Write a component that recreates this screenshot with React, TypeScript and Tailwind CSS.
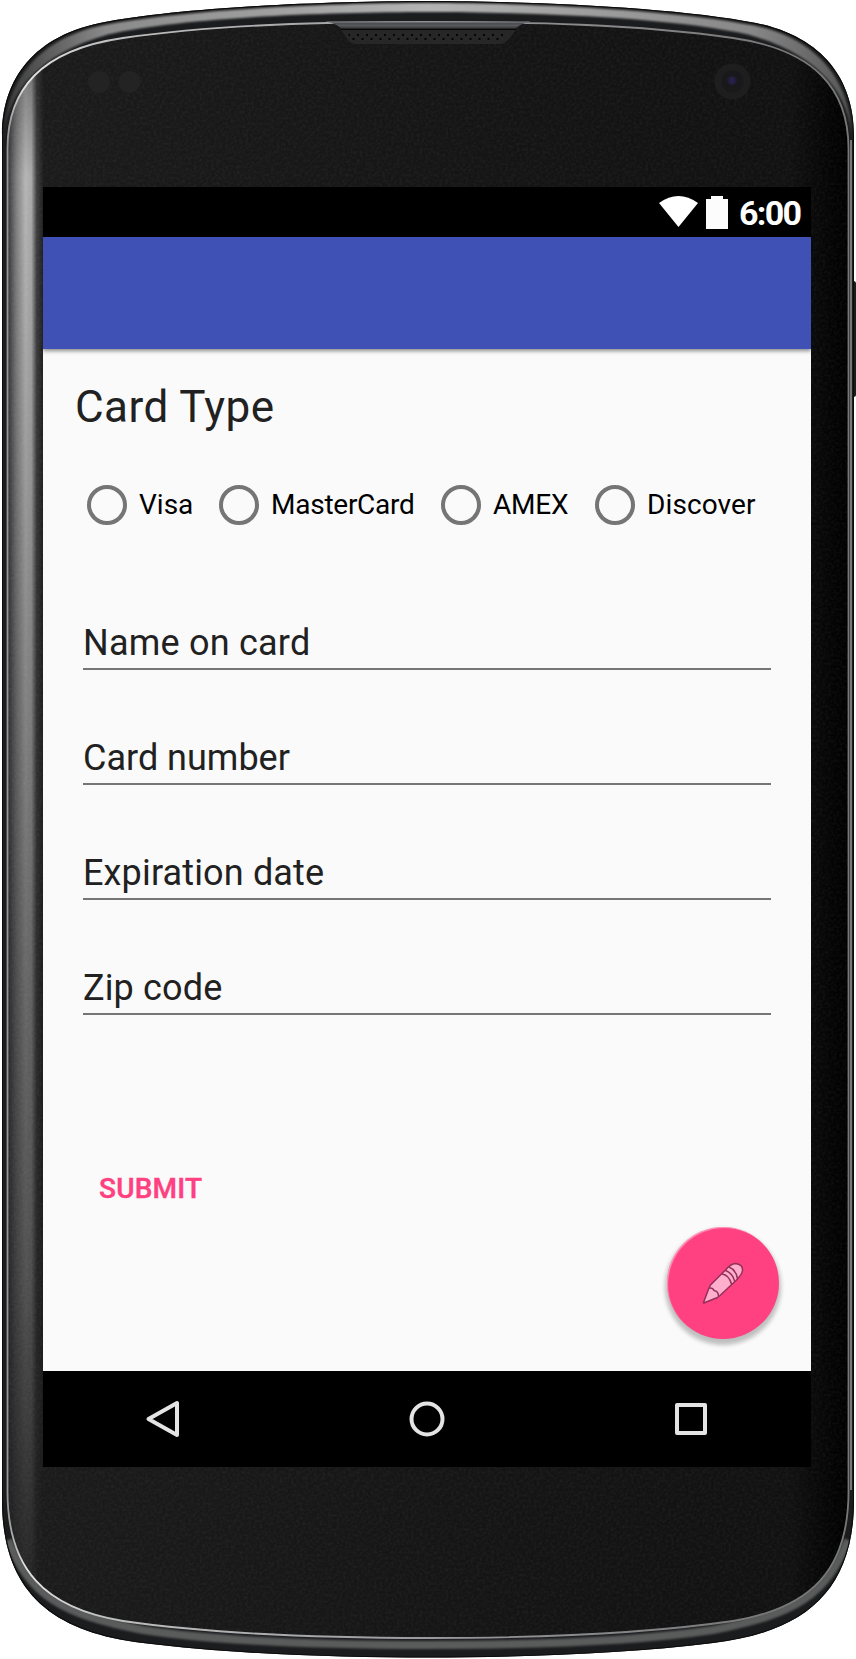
const OUTER =
  "M2 135C2 85 28 38 100 23C180 7 330 1 428 1C526 1 676 7 756 23C828 38 854 85 854 135V1500C854 1590 806 1632 713 1643C626 1654 516 1657.5 428 1657.5C340 1657.5 230 1654 143 1643C50 1632 2 1590 2 1500Z";
const INNER =
  "M7.5 150C7 90 40 50 123 38C220 24 330 22 428 22C526 22 636 24 733 38C816 50 849 90 848.5 150V1490C849 1570 811 1608 733 1621C636 1635 516 1638 428 1638C340 1638 220 1635 123 1621C45 1608 7 1570 7.5 1490Z";

function PhoneBody() {
  return (
    <svg viewBox="0 0 856 1659" width="856" height="1659" className="absolute inset-0" aria-hidden="true">
      <defs>
        <linearGradient id="face" x1="0" x2="1">
          <stop offset="0" stopColor="#1b1b1b" />
          <stop offset="0.6" stopColor="#141414" />
          <stop offset="0.93" stopColor="#111" />
          <stop offset="0.98" stopColor="#040404" />
          <stop offset="1" stopColor="#000" />
        </linearGradient>
        <linearGradient id="strip" gradientUnits="userSpaceOnUse" x1="7" x2="44" y1="0" y2="0">
          <stop offset="0" stopColor="#fff" stopOpacity="0.1" />
          <stop offset="0.25" stopColor="#fff" stopOpacity="0.55" />
          <stop offset="0.5" stopColor="#fff" stopOpacity="0.85" />
          <stop offset="0.66" stopColor="#fff" stopOpacity="0.78" />
          <stop offset="0.8" stopColor="#fff" stopOpacity="0.2" />
          <stop offset="1" stopColor="#fff" stopOpacity="0" />
        </linearGradient>
        <linearGradient id="stripFade" gradientUnits="userSpaceOnUse" x1="0" x2="0" y1="70" y2="1590">
          <stop offset="0" stopColor="#fff" stopOpacity="0.5" />
          <stop offset="0.07" stopColor="#fff" stopOpacity="0.8" />
          <stop offset="0.22" stopColor="#fff" stopOpacity="0.7" />
          <stop offset="0.4" stopColor="#fff" stopOpacity="0.55" />
          <stop offset="0.6" stopColor="#fff" stopOpacity="0.4" />
          <stop offset="0.8" stopColor="#fff" stopOpacity="0.28" />
          <stop offset="1" stopColor="#fff" stopOpacity="0.05" />
        </linearGradient>
        <mask id="stripMask" style={{ colorInterpolation: "sRGB" }}>
          <rect width="856" height="1659" fill="url(#stripFade)" />
        </mask>
        <linearGradient id="topBand" x1="0" x2="1">
          <stop offset="0" stopColor="#3a3a3a" />
          <stop offset="0.12" stopColor="#8a8a8a" />
          <stop offset="0.5" stopColor="#b4b4b4" />
          <stop offset="0.88" stopColor="#888" />
          <stop offset="1" stopColor="#555" />
        </linearGradient>
        <linearGradient id="rim" gradientUnits="userSpaceOnUse" x1="0" x2="856" y1="0" y2="0">
          <stop offset="0" stopColor="#777" />
          <stop offset="0.03" stopColor="#e4e4e4" />
          <stop offset="0.12" stopColor="#c0c0c0" />
          <stop offset="0.5" stopColor="#9a9a9e" />
          <stop offset="0.9" stopColor="#777" />
          <stop offset="1" stopColor="#777" />
        </linearGradient>
        <linearGradient id="earTop" x1="0" x2="0" y1="0" y2="1">
          <stop offset="0" stopColor="#85878c" />
          <stop offset="0.3" stopColor="#46474a" />
          <stop offset="0.5" stopColor="#5c5d60" />
          <stop offset="1" stopColor="#2e2e30" />
        </linearGradient>
        <filter id="soft" x="-5%" y="-20%" width="110%" height="140%">
          <feGaussianBlur stdDeviation="1" />
        </filter>
        <filter id="grain">
          <feTurbulence type="fractalNoise" baseFrequency="0.35" numOctaves="2" />
          <feColorMatrix values="0 0 0 0 1  0 0 0 0 1  0 0 0 0 1  0.09 0 0 0 -0.033" />
        </filter>
        <clipPath id="outerClip">
          <path d={OUTER} />
        </clipPath>
        <clipPath id="innerClip">
          <path d={INNER} />
        </clipPath>
        <pattern id="holes" width="9" height="8" patternUnits="userSpaceOnUse" x="347" y="32">
          <circle cx="2" cy="3" r="1.2" fill="#050505" />
          <circle cx="6.5" cy="7" r="1.2" fill="#050505" />
        </pattern>
      </defs>
      <rect x="851" y="281" width="5" height="116" rx="2.5" fill="#1b1b1b" />
      <path d={OUTER} fill="#1b1c1e" />
      <g clipPath="url(#outerClip)">
        <path
          d="M4 140C4 88 32 40 102 25.500C184 9.500 330 3 428 3C526 3 672 9.500 754 25.500C824 40 852 88 852 140C850 94 818 54 748 34.500C670 17 526 12 428 12C330 12 186 17 108 34.500C38 54 6 94 4 140Z"
          fill="url(#topBand)"
          filter="url(#soft)"
        />
        <path
          d="M8 1540C30 1595 60 1614 143 1630C230 1643 340 1645 428 1645C516 1645 626 1643 713 1630C796 1614 826 1595 848 1540"
          fill="none"
          stroke="#5a5c5c"
          strokeWidth="8"
          filter="url(#soft)"
        />
        <path d={OUTER} fill="none" stroke="#0b0b0b" strokeWidth="2" />
        <path d="M851 140V1490" stroke="#777" strokeWidth="2" />
      </g>
      <path d={INNER} fill="url(#face)" />
      <g clipPath="url(#innerClip)">
        <rect x="7" y="60" width="38" height="1540" fill="url(#strip)" mask="url(#stripMask)" />
        <rect width="856" height="1659" filter="url(#grain)" />
      </g>
      <path d={INNER} fill="none" stroke="url(#rim)" strokeWidth="1.8" />
      <path d="M325 21.500H531Q521 23 515 29H342Q336 23 325 21.500Z" fill="url(#earTop)" />
      <path d="M341 29.500H516" stroke="#060606" strokeWidth="1.5" />
      <path d="M341 30H516L508 40Q504 44 499 44H356Q351 44 348 40Z" fill="#272727" />
      <path d="M347 32H508L504 42H352Z" fill="url(#holes)" />
      <circle cx="99" cy="82" r="11" fill="#232323" />
      <circle cx="129.500" cy="82" r="11" fill="#232323" />
      <circle cx="732.500" cy="81.500" r="18" fill="#1e1e1e" />
      <circle cx="732.500" cy="81.500" r="11" fill="#19191b" />
      <circle cx="732" cy="80.500" r="4" fill="#25204c" filter="url(#soft)" />
    </svg>
  );
}

function StatusBar() {
  return (
    <div className="flex h-[50px] shrink-0 justify-end bg-black">
      <svg width="42" height="50" viewBox="0 0 42 50" className="mr-[6px]">
        <path d="M1 16Q20.500 2 40 16L20.500 40Z" fill="#fff" />
      </svg>
      <svg width="22" height="50" viewBox="0 0 22 50" className="mr-[11px]">
        <path d="M5 9H17V12H22V42H0V12H5Z" fill="#fcfcfc" />
      </svg>
      <span className="h-[50px] w-[72px] text-[34px] leading-[53px] font-bold tracking-[-1.7px] text-white">6:00</span>
    </div>
  );
}

const cards = [
  { name: "Visa", width: "w-[132px]", tracking: "tracking-normal" },
  { name: "MasterCard", width: "w-[222px]", tracking: "tracking-[-0.25px]" },
  { name: "AMEX", width: "w-[154px]", tracking: "tracking-[-0.2px]" },
  { name: "Discover", width: "w-[160px]", tracking: "tracking-[0.1px]" },
];

const fields = [
  { label: "Name on card", tracking: "tracking-[0.22px]" },
  { label: "Card number", tracking: "tracking-normal" },
  { label: "Expiration date", tracking: "tracking-[0.15px]" },
  { label: "Zip code", tracking: "tracking-[0.15px]" },
];

function Pencil() {
  return (
    <svg width="44" height="44" viewBox="0 0 44 44" fill="#ffaecb" stroke="#94305a" strokeWidth="1.500" strokeLinejoin="round">
      <path d="M2.500 41.500L8 27L9.500 24L24 9.500Q30 2.500 34.500 2.500Q42 3.500 41.500 9.500Q41 13.500 35 19.500L19 34.500L16.500 36.500L4 41.500Q2 42.500 2.500 41.500Z" />
      <path d="M8 27Q12 26.500 13 29.500Q17.500 30 17.500 35.500M21 13Q28 14 30.500 23M24.500 9.500Q31.500 12 33.500 20M28 6Q35 9 36.500 17.500" fill="none" />
    </svg>
  );
}

export default function App() {
  return (
    <div className="relative h-[1659px] w-[856px] overflow-hidden bg-white font-['Roboto',sans-serif]">
      <PhoneBody />
      <div className="relative pt-[187px] pl-[43px]">
        <div className="flex h-[1280px] w-[768px] flex-col bg-[#fafafa]">
          <StatusBar />
          <header className="relative z-10 h-[112px] shrink-0 bg-[#3f51b5] shadow-[0_2px_4px_rgba(0,0,0,0.45)] [clip-path:inset(0_0_-8px_0)]" />
          <main className="relative flex grow flex-col px-[40px] pt-[32px]">
            <h1 className="-ml-[8px] h-[52px] text-[44px] leading-[52px] tracking-[0.45px] text-[#212121]">Card Type</h1>
            <div className="mt-[52px] ml-1 flex">
              {cards.map((c) => (
                <label key={c.name} className={`flex h-10 shrink-0 items-center gap-3 ${c.width}`}>
                  <span className="size-10 shrink-0 rounded-full border-4 border-[#757575]" />
                  <span className={`text-[28px] leading-10 whitespace-nowrap text-black ${c.tracking}`}>{c.name}</span>
                </label>
              ))}
            </div>
            <div className="mt-[97px] flex flex-col gap-[67px]">
              {fields.map((f) => (
                <div
                  key={f.label}
                  className={`h-12 border-b-2 border-[#757575] text-[36px] leading-[42px] text-[#212121] ${f.tracking}`}
                >
                  {f.label}
                </div>
              ))}
            </div>
            <button className="mt-[158px] ml-4 self-start text-[28px] leading-8 font-medium tracking-[0.2px] text-[#ff4081] [-webkit-text-stroke:0.4px_#ff4081]">
              SUBMIT
            </button>
            <button
              aria-label="Edit"
              className="absolute right-8 bottom-8 flex size-28 items-center justify-center rounded-full bg-[#ff4081] shadow-[0_4px_4px_2px_rgba(0,0,0,0.24),inset_1.5px_1.5px_1px_-0.5px_rgba(255,255,255,0.45)]"
            >
              <Pencil />
            </button>
          </main>
          <nav className="flex h-24 shrink-0 items-center justify-between bg-black px-[100px]">
            <svg width="40" height="40" viewBox="0 0 40 40" fill="none" stroke="#e4e4e4" strokeWidth="4" strokeLinejoin="round">
              <path d="M5.500 20L34 4V36Z" />
            </svg>
            <svg width="40" height="40" viewBox="0 0 40 40" fill="none" stroke="#e4e4e4" strokeWidth="4">
              <circle cx="20" cy="20" r="15.500" />
            </svg>
            <svg width="40" height="40" viewBox="0 0 40 40" fill="none" stroke="#e4e4e4" strokeWidth="4" strokeLinejoin="round">
              <path d="M6 6H34V34H6Z" />
            </svg>
          </nav>
        </div>
      </div>
    </div>
  );
}
